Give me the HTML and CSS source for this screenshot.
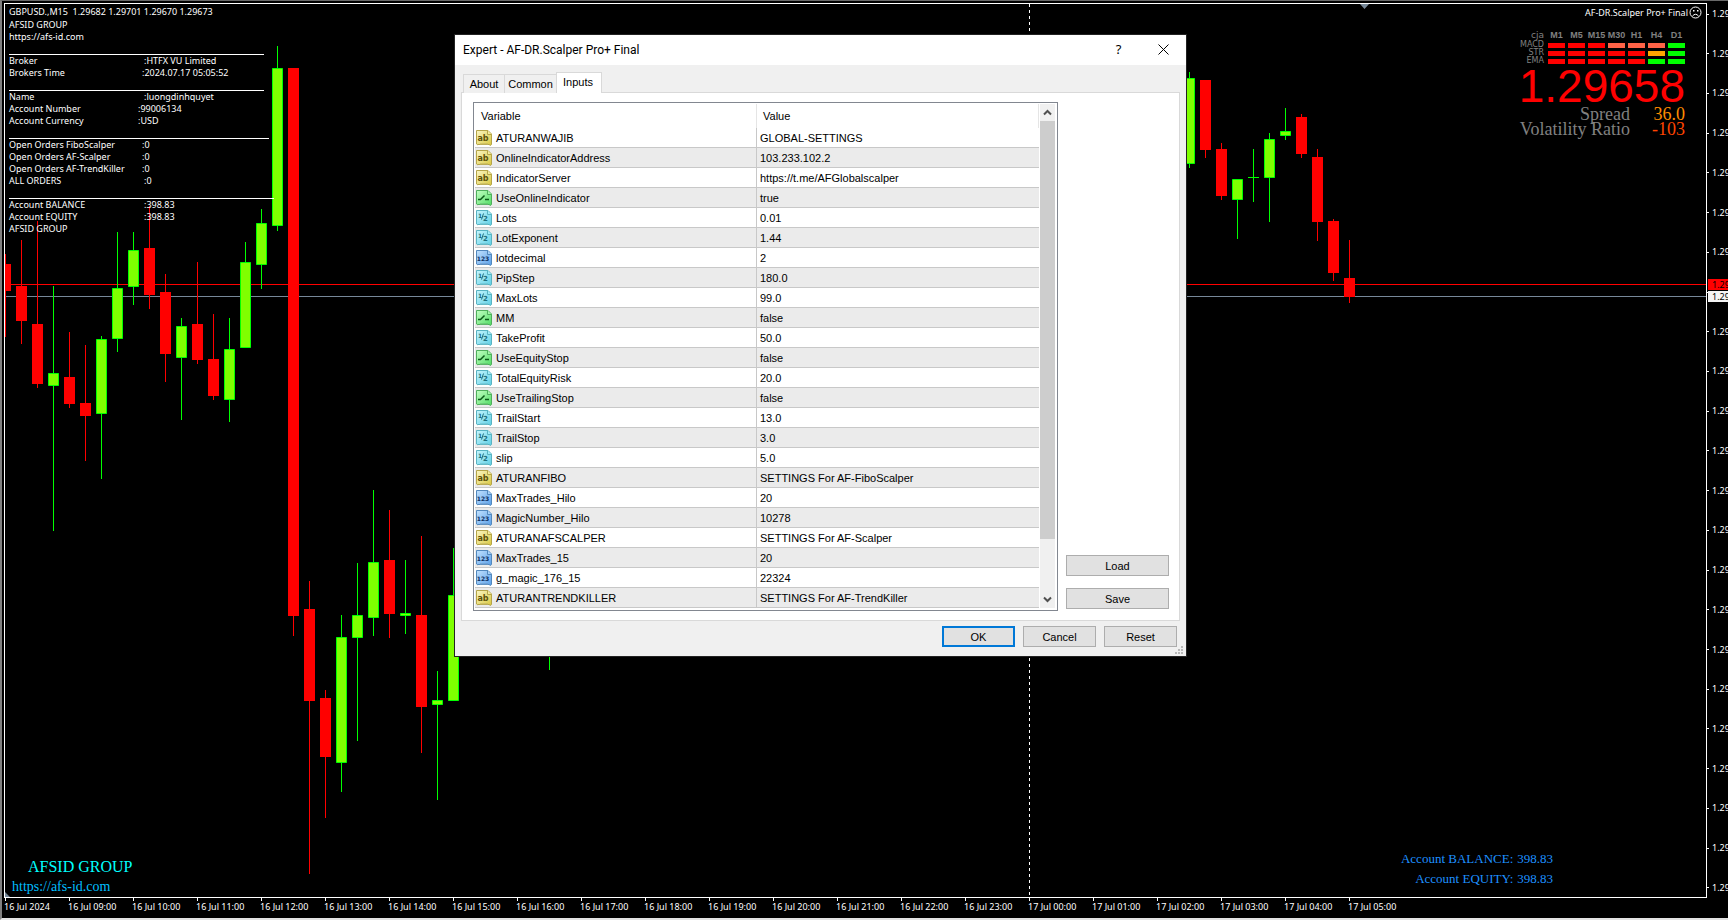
FILE: index.html
```html
<!DOCTYPE html>
<html lang="en">
<head>
<meta charset="utf-8">
<title>GBPUSD.,M15</title>
<link rel="stylesheet" href="styles.css">
</head>
<body>
<svg class="sprites" aria-hidden="true">
  <defs>
    <linearGradient id="g-str" x1="0" y1="0" x2="1" y2="1"><stop offset="0" stop-color="#fbf6c4"/><stop offset="1" stop-color="#d9c840"/></linearGradient>
    <linearGradient id="g-bool" x1="0" y1="0" x2="1" y2="1"><stop offset="0" stop-color="#c4ffc4"/><stop offset="1" stop-color="#4fdc62"/></linearGradient>
    <linearGradient id="g-dbl" x1="0" y1="0" x2="1" y2="1"><stop offset="0" stop-color="#c6f6ff"/><stop offset="1" stop-color="#5fcfe4"/></linearGradient>
    <linearGradient id="g-int" x1="0" y1="0" x2="1" y2="1"><stop offset="0" stop-color="#c2e2ff"/><stop offset="1" stop-color="#5a9fe8"/></linearGradient>
    <path id="sheet" d="M.5 .5H12L15.500 4V14.500L14 15.500L13 14L12 15L11 13.500L10 15L9 13.500L8 15L7 13.500L6 15L5 13.500L4 15L3 14L2 15L.5 14Z"/>
    <symbol id="i-str" viewBox="0 0 16 16"><use href="#sheet" fill="url(#g-str)" stroke="#b5a548"/><path d="M11.500 .5V4.500H15.500" fill="#f3eca0" stroke="#b5a548"/><text x="7" y="11" font-size="8" font-weight="bold" text-anchor="middle" fill="#5c5208">ab</text></symbol>
    <symbol id="i-bool" viewBox="0 0 16 16"><use href="#sheet" fill="url(#g-bool)" stroke="#4fae5c"/><path d="M11.500 .5V4.500H15.500" fill="#a2f5a8" stroke="#4fae5c"/><path d="M2 9.500H4.500L8.500 5.500M9 9.500H13" fill="none" stroke="#0b5a18" stroke-width="1.500"/></symbol>
    <symbol id="i-dbl" viewBox="0 0 16 16"><use href="#sheet" fill="url(#g-dbl)" stroke="#58b3c2"/><path d="M11.500 .5V4.500H15.500" fill="#a5ecf8" stroke="#58b3c2"/><text x="2" y="8" font-size="6" font-weight="bold" fill="#1d6d7c">1</text><path d="M5.500 9.500L7.500 3.500" stroke="#1d6d7c"/><text x="7" y="11" font-size="7" font-weight="bold" fill="#1d6d7c">2</text></symbol>
    <symbol id="i-int" viewBox="0 0 16 16"><use href="#sheet" fill="url(#g-int)" stroke="#5288bd"/><path d="M11.500 .5V4.500H15.500" fill="#a8d2f8" stroke="#5288bd"/><text x="7" y="11" font-size="6" font-weight="bold" text-anchor="middle" fill="#0b2f63">123</text></symbol>
  </defs>
</svg>

<main class="terminal">
  <section class="plot">
    <svg class="candles" aria-label="GBPUSD M15 candles">
      <g transform="translate(-5 -4)">
        <path d="M5 284.500H4000" stroke="#f00"/>
        <path d="M5 296.500H4000" stroke="#778899"/>
        <path d="M1029.500 4V2000" stroke="#fff" stroke-dasharray="3 3"/>
        <path fill="none" stroke="#f00" d="M5.500 254V337M21.500 240V344M37.500 221V388M69.500 332V408M85.500 345V461M149.500 206V309M165.500 274V382M197.500 262V364M213.500 314V400M293.500 68V636M309.500 581V874M325.500 690V818M389.500 510V638M421.500 536V753M1205.500 80V158M1221.500 143V200M1301.500 114V158M1317.500 149V241M1333.500 219V281M1349.500 240V303"/>
        <path fill="#f00" d="M0 264h11v27h-11zM16 286h11v35h-11zM32 324h11v60h-11zM64 377h11v27h-11zM80 403h11v13h-11zM144 248h11v47h-11zM160 292h11v62h-11zM192 324h11v36h-11zM208 359h11v37h-11zM288 68h11v548h-11zM304 609h11v92h-11zM320 698h11v59h-11zM384 560h11v54h-11zM416 615h11v92h-11zM1200 80h11v70h-11zM1216 149h11v47h-11zM1296 117h11v37h-11zM1312 157h11v65h-11zM1328 221h11v52h-11zM1344 278h11v19h-11z"/>
        <path fill="none" stroke="#0f0" d="M53.500 286V531M101.500 336V479M117.500 232V352M133.500 232V305M181.500 318V420M229.500 318V422M245.500 242V348M261.500 209V289M277.500 46V231M341.500 615V792M357.500 563V741M373.500 490V636M405.500 560V634M437.500 671V800M453.500 548V701M549.500 560V670M1189.500 72V168M1237.500 179V239M1253.500 149V202M1248 177.500H1259M1269.500 133V222M1285.500 108V140"/>
        <path fill="#7fff00" stroke="#0f0" d="M48.500 373.500h10v12h-10zM96.500 339.500h10v74h-10zM112.500 288.500h10v50h-10zM128.500 250.500h10v36h-10zM176.500 326.500h10v31h-10zM224.500 349.500h10v50h-10zM240.500 262.500h10v85h-10zM256.500 223.500h10v41h-10zM272.500 68.500h10v157h-10zM336.500 637.500h10v125h-10zM352.500 615.500h10v22h-10zM368.500 562.500h10v55h-10zM400.500 613.500h10v2h-10zM432.500 700.500h10v4h-10zM448.500 595.500h10v105h-10zM1184.500 78.500h10v85h-10zM1232.500 179.500h10v20h-10zM1264.500 139.500h10v38h-10zM1280.500 131.500h10v4h-10z"/>
        <path fill="#778899" d="M1360 4h9l-4.500 5zM5 892v5h5z"/>
      </g>
    </svg>

    <div class="comment">
      <p>GBPUSD.,M15&nbsp; 1.29682 1.29701 1.29670 1.29673</p>
      <p>AFSID GROUP</p>
      <p>https://afs-id.com</p>
      <hr>
      <p><span class="key key-wide">Broker</span>:HTFX VU Limited</p>
      <p><span class="key">Brokers Time</span>:2024.07.17 05:05:52</p>
      <hr>
      <p><span class="key key-wide">Name</span>:luongdinhquyet</p>
      <p><span class="key key-narrow">Account Number</span>:99006134</p>
      <p><span class="key key-narrow">Account Currency</span>:USD</p>
      <hr class="rule-wide">
      <p><span class="key">Open Orders FiboScalper</span>:0</p>
      <p><span class="key">Open Orders AF-Scalper</span>:0</p>
      <p><span class="key">Open Orders AF-TrendKiller</span>:0</p>
      <p><span class="key key-wide">ALL ORDERS</span>:0</p>
      <hr class="rule-widest">
      <p><span class="key key-wide">Account BALANCE</span>:398.83</p>
      <p><span class="key key-wide">Account EQUITY</span>:398.83</p>
      <p>AFSID GROUP</p>
    </div>

    <div class="expert">AF-DR.Scalper Pro+ Final
      <svg width="13" height="13" viewBox="0 0 13 13" fill="none" stroke="#fff" aria-label="Expert disabled"><circle cx="6.500" cy="6.500" r="5.500"/><path d="M3.500 10Q6.500 6.500 9.500 10"/><path d="M4 4h1.500v1.500H4zM8 4h1.500v1.500H8z" fill="#fff" stroke="none"/></svg>
    </div>

    <div class="signals">
      <div class="matrix">
        <span class="cja">cja</span><b>M1</b><b>M5</b><b>M15</b><b>M30</b><b>H1</b><b>H4</b><b>D1</b>
        <span>MACD</span><i></i><i></i><i></i><i class="tomato"></i><i class="tomato"></i><i class="tomato"></i><i class="lime"></i>
        <span>STR</span><i></i><i></i><i></i><i></i><i></i><i class="orange"></i><i class="lime"></i>
        <span>EMA</span><i></i><i></i><i></i><i></i><i></i><i class="lime"></i><i class="lime"></i>
      </div>
      <div class="price">1.29658</div>
      <div class="ratios">
        <span>Spread</span><span class="spread">36.0</span>
        <span>Volatility Ratio</span><span class="ratio">-103</span>
      </div>
    </div>

    <div class="brand">
      <p class="brand-name">AFSID GROUP</p>
      <p class="brand-url">https://afs-id.com</p>
    </div>
    <div class="account">
      <span>Account BALANCE:</span><span>398.83</span>
      <span>Account EQUITY:</span><span>398.83</span>
    </div>
  </section>

  <aside class="prices">
    <span>1.29</span><span>1.29</span><span>1.29</span><span>1.29</span><span>1.29</span><span>1.29</span><span>1.29</span><span></span><span>1.29</span><span>1.29</span><span>1.29</span><span>1.29</span><span>1.29</span><span>1.29</span><span>1.29</span><span>1.29</span><span>1.29</span><span>1.29</span><span>1.29</span><span>1.29</span><span>1.29</span><span>1.29</span><span>1.29</span>
    <div class="quotes"><div class="ask">1.29</div><div class="bid">1.29</div></div>
  </aside>

  <footer class="times">
    <span>16 Jul 2024</span><span>16 Jul 09:00</span><span>16 Jul 10:00</span><span>16 Jul 11:00</span><span>16 Jul 12:00</span><span>16 Jul 13:00</span><span>16 Jul 14:00</span><span>16 Jul 15:00</span><span>16 Jul 16:00</span><span>16 Jul 17:00</span><span>16 Jul 18:00</span><span>16 Jul 19:00</span><span>16 Jul 20:00</span><span>16 Jul 21:00</span><span>16 Jul 22:00</span><span>16 Jul 23:00</span><span>17 Jul 00:00</span><span>17 Jul 01:00</span><span>17 Jul 02:00</span><span>17 Jul 03:00</span><span>17 Jul 04:00</span><span>17 Jul 05:00</span>
  </footer>
</main>

<div class="dialog" role="dialog" aria-labelledby="dialog-title">
  <header class="titlebar">
    <h1 id="dialog-title">Expert - AF-DR.Scalper Pro+ Final</h1>
    <button type="button" class="caption" aria-label="Help">?</button>
    <button type="button" class="caption" aria-label="Close"><svg width="11" height="11" viewBox="0 0 11 11" stroke="#000" fill="none"><path d="M.5 .5L10.500 10.500M10.500 .5L.5 10.500"/></svg></button>
  </header>
  <div class="tabs" role="tablist">
    <button type="button" role="tab" class="tab-about">About</button><button type="button" role="tab" class="tab-common">Common</button><button type="button" role="tab" class="active" aria-selected="true">Inputs</button>
  </div>
  <div class="page">
    <div class="list">
      <table>
        <thead><tr><th>Variable</th><th>Value</th></tr></thead>
        <tbody>
          <tr><td><svg><use href="#i-str"/></svg>ATURANWAJIB</td><td>GLOBAL-SETTINGS</td></tr>
          <tr><td><svg><use href="#i-str"/></svg>OnlineIndicatorAddress</td><td>103.233.102.2</td></tr>
          <tr><td><svg><use href="#i-str"/></svg>IndicatorServer</td><td>https://t.me/AFGlobalscalper</td></tr>
          <tr><td><svg><use href="#i-bool"/></svg>UseOnlineIndicator</td><td>true</td></tr>
          <tr><td><svg><use href="#i-dbl"/></svg>Lots</td><td>0.01</td></tr>
          <tr><td><svg><use href="#i-dbl"/></svg>LotExponent</td><td>1.44</td></tr>
          <tr><td><svg><use href="#i-int"/></svg>lotdecimal</td><td>2</td></tr>
          <tr><td><svg><use href="#i-dbl"/></svg>PipStep</td><td>180.0</td></tr>
          <tr><td><svg><use href="#i-dbl"/></svg>MaxLots</td><td>99.0</td></tr>
          <tr><td><svg><use href="#i-bool"/></svg>MM</td><td>false</td></tr>
          <tr><td><svg><use href="#i-dbl"/></svg>TakeProfit</td><td>50.0</td></tr>
          <tr><td><svg><use href="#i-bool"/></svg>UseEquityStop</td><td>false</td></tr>
          <tr><td><svg><use href="#i-dbl"/></svg>TotalEquityRisk</td><td>20.0</td></tr>
          <tr><td><svg><use href="#i-bool"/></svg>UseTrailingStop</td><td>false</td></tr>
          <tr><td><svg><use href="#i-dbl"/></svg>TrailStart</td><td>13.0</td></tr>
          <tr><td><svg><use href="#i-dbl"/></svg>TrailStop</td><td>3.0</td></tr>
          <tr><td><svg><use href="#i-dbl"/></svg>slip</td><td>5.0</td></tr>
          <tr><td><svg><use href="#i-str"/></svg>ATURANFIBO</td><td>SETTINGS For AF-FiboScalper</td></tr>
          <tr><td><svg><use href="#i-int"/></svg>MaxTrades_Hilo</td><td>20</td></tr>
          <tr><td><svg><use href="#i-int"/></svg>MagicNumber_Hilo</td><td>10278</td></tr>
          <tr><td><svg><use href="#i-str"/></svg>ATURANAFSCALPER</td><td>SETTINGS For AF-Scalper</td></tr>
          <tr><td><svg><use href="#i-int"/></svg>MaxTrades_15</td><td>20</td></tr>
          <tr><td><svg><use href="#i-int"/></svg>g_magic_176_15</td><td>22324</td></tr>
          <tr><td><svg><use href="#i-str"/></svg>ATURANTRENDKILLER</td><td>SETTINGS For AF-TrendKiller</td></tr>
        </tbody>
      </table>
      <div class="scrollbar">
        <button type="button" aria-label="Scroll up"><svg width="9" height="7" viewBox="0 0 9 7" fill="none" stroke="#505050" stroke-width="2"><path d="M1 5.500L4.500 2L8 5.500"/></svg></button>
        <div class="track"><div class="thumb"></div></div>
        <button type="button" aria-label="Scroll down"><svg width="9" height="7" viewBox="0 0 9 7" fill="none" stroke="#505050" stroke-width="2"><path d="M1 1.500L4.500 5L8 1.500"/></svg></button>
      </div>
    </div>
    <div class="side">
      <button type="button" class="btn">Load</button>
      <button type="button" class="btn">Save</button>
    </div>
  </div>
  <div class="actions">
    <button type="button" class="btn default">OK</button>
    <button type="button" class="btn">Cancel</button>
    <button type="button" class="btn">Reset</button>
  </div>
  <svg class="grip" width="8" height="8" viewBox="0 0 8 8" fill="#b8b8b8" aria-hidden="true"><path d="M6 0h2v2H6zM3 3h2v2H3zM6 3h2v2H6zM0 6h2v2H0zM3 6h2v2H3zM6 6h2v2H6z"/></svg>
</div>
</body>
</html>
```
FILE: styles.css
```css
* { box-sizing: border-box; }
body {
  margin: 0;
  background: #000;
  color: #fff;
  font: 9px/12px "Noto Sans", "Open Sans", sans-serif;
}
p, h1 { margin: 0; }
button { font: inherit; color: inherit; }
.sprites { position: absolute; width: 0; height: 0; }

/* Chart window */
.terminal {
  display: grid;
  grid-template: minmax(0, 1fr) 20px / minmax(0, 1fr) 21px;
  height: 100vh;
  padding: 2px 0 0 2px;
  border-top: 1px solid #696969;
  border-left: 2px solid #808080;
  border-bottom: 2px solid #e3e3e3;
  overflow: hidden;
}
.plot { position: relative; border: 1px solid #fff; overflow: hidden; }
.candles { display: block; width: 100%; height: 100%; }

.comment { position: absolute; top: 2px; left: 4px; white-space: nowrap; }
.comment p:first-child { margin-bottom: 1px; }
.comment hr {
  width: 255px;
  height: 12px;
  margin: 0;
  border: 0;
  border-bottom: 1px solid #fff;
}
.comment .rule-wide { width: 260px; }
.comment .rule-widest { width: 265px; }
.key { display: inline-block; width: 133px; }
.key-wide { width: 135px; }
.key-narrow { width: 129px; }

.expert { position: absolute; top: 2px; right: 4px; display: flex; align-items: center; gap: 1px; }

.signals { position: absolute; top: 25px; right: 21px; color: #808080; }
.matrix {
  display: grid;
  grid-template-columns: 1fr repeat(7, 17px);
  grid-template-rows: 12px repeat(3, 8px);
  column-gap: 3px;
  justify-items: end;
  align-items: center;
  font: 8px/8px "DejaVu Sans", sans-serif;
}
.matrix span { padding-right: 1px; }
.matrix .cja { font-size: 9px; }
.matrix b { justify-self: center; font: bold 9px/12px "Liberation Sans", sans-serif; }
.matrix i { width: 17px; height: 5px; background: #f00; }
.matrix .tomato { background: #ff6347; }
.matrix .orange { background: #ffa500; }
.matrix .lime { background: #0f0; }
.price { color: #f00; font: 46px/42px "Liberation Sans", sans-serif; text-align: right; }
.ratios {
  display: grid;
  grid-template-columns: 1fr 55px;
  justify-items: end;
  font: 18px/15px "Liberation Serif", serif;
  white-space: nowrap;
}
.spread { color: #ff8c00; }
.ratio { color: #ff4500; }

.brand { position: absolute; left: 7px; bottom: 0; font: 16px/20px "Liberation Serif", serif; }
.brand-name { padding-left: 16px; color: #0ff; }
.brand-url { color: #00bfff; font-size: 14px; }
.account {
  position: absolute;
  right: 153px;
  bottom: 8px;
  display: grid;
  grid-template-columns: auto auto;
  column-gap: 4px;
  justify-items: end;
  color: #1e90ff;
  font: 13px/20px "Liberation Serif", serif;
}

/* Axes */
.prices {
  position: relative;
  display: flex;
  flex-direction: column;
  justify-content: space-between;
  padding: 5px 0 4px;
  overflow: hidden;
}
.prices span { display: flex; align-items: center; gap: 3px; height: 12px; }
.prices span::before { content: ""; flex: none; width: 2px; height: 1px; background: #fff; }
.quotes { position: absolute; top: 276px; left: 1px; right: 0; }
.ask, .bid { height: 11px; padding-left: 4px; line-height: 11px; }
.ask { background: #f00; color: #000; margin-bottom: 1px; }
.bid { background: #f4f4f4; color: #000; }
.times { grid-column: 1 / -1; display: flex; overflow: hidden; }
.times span { position: relative; flex: none; width: 64px; padding-top: 3px; }
.times span::before { content: ""; position: absolute; top: 0; left: 1px; width: 1px; height: 3px; background: #fff; }

/* Dialog */
.dialog {
  position: absolute;
  top: 34px;
  left: 454px;
  width: 733px;
  border: 1px solid #222;
  background: #f0f0f0;
  color: #000;
  font: 11px/16px "Liberation Sans", sans-serif;
}
.titlebar { display: flex; align-items: center; height: 30px; padding-left: 8px; background: #fff; }
.titlebar h1 { flex: 1; font: 12px/16px Roboto, "Noto Sans", sans-serif; }
.caption {
  display: flex;
  align-items: center;
  justify-content: center;
  width: 45px;
  height: 30px;
  padding: 0 0 2px;
  border: 0;
  background: none;
  font: 13px/16px "Noto Sans", sans-serif;
}
.tabs { display: flex; align-items: flex-end; height: 28px; padding: 7px 8px 0; }
.tabs button {
  width: 46px;
  height: 19px;
  padding: 0;
  border: 1px solid #d9d9d9;
  border-right: 0;
  border-bottom: 0;
  background: #f0f0f0;
}
.tabs .tab-about { width: 41px; }
.tabs .tab-common { width: 52px; }
.tabs .active {
  position: relative;
  height: 21px;
  padding: 0 2px 2px 0;
  border-right: 1px solid #d9d9d9;
  background: #fff;
}
.page {
  display: flex;
  gap: 8px;
  margin: -1px 6px 0;
  padding: 9px 10px 9px 11px;
  border: 1px solid #d9d9d9;
  background: #fff;
}
.list { flex: 1; display: flex; padding: 1px 2px 2px 1px; border: 1px solid #828790; }
table { flex: 1; align-self: flex-start; border-collapse: separate; border-spacing: 0; table-layout: fixed; }
th { height: 24px; padding: 0 6px; border-right: 1px solid #e5e5e5; font-weight: normal; text-align: left; }
td { height: 20px; padding: 1px 3px; border-bottom: 1px solid #c8c8c8; white-space: nowrap; }
td:first-child { width: 282px; padding-left: 1px; border-right: 1px solid #c8c8c8; }
th:first-child { width: 282px; }
tbody tr:nth-child(even) { background: #ebebeb; }
td svg { width: 16px; height: 16px; margin-right: 4px; vertical-align: top; font-family: "DejaVu Sans", sans-serif; }
.scrollbar { display: flex; flex-direction: column; width: 15px; margin-left: 1px; background: #f0f0f0; }
.scrollbar button { display: flex; align-items: center; justify-content: center; height: 17px; padding: 0; border: 0; background: none; }
.track { flex: 1; }
.thumb { height: 89%; background: #cdcdcd; }
.side { display: flex; flex-direction: column; justify-content: flex-end; gap: 12px; width: 103px; padding-bottom: 2px; }
.btn { height: 21px; padding: 0; border: 1px solid #adadad; background: #e1e1e1; }
.actions { display: flex; justify-content: flex-end; gap: 8px; padding: 5px 9px 9px; }
.actions .btn { width: 73px; }
.actions .default { border: 2px solid #0078d7; }
.grip { position: absolute; right: 3px; bottom: 2px; }
```
